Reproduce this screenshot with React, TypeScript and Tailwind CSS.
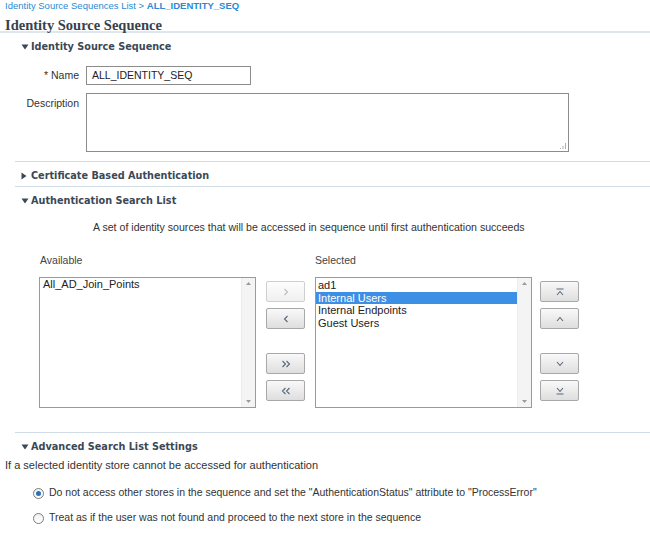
import React from "react";

const sans = "font-['Liberation_Sans',Arial,sans-serif]";

function Tri({ open }: { open: boolean }) {
  return open ? (
    <svg width="8" height="6" viewBox="0 0 8 6" className="shrink-0">
      <path d="M0.5 0.5 H7.5 L4 5.5 Z" fill="#3b4856" />
    </svg>
  ) : (
    <svg width="6" height="8" viewBox="0 0 6 8" className="shrink-0">
      <path d="M0.5 0.5 V7.5 L5.5 4 Z" fill="#3b4856" />
    </svg>
  );
}

function SectionHeader({ open, title, h }: { open: boolean; title: string; h: string }) {
  return (
    <div className={`flex items-center pl-[21px] ${h}`}>
      <span className="flex w-[10px]">
        <Tri open={open} />
      </span>
      <span className="font-['DejaVu_Sans',Verdana,sans-serif] text-[9.7px] font-bold leading-[12px] text-[#3b4856]">
        {title}
      </span>
    </div>
  );
}

function Sep() {
  return <div className="ml-[15px] h-px bg-[#cfdbe5]" />;
}

function ScrollBar() {
  return (
    <div className="flex w-[14px] flex-col items-center justify-between border-l border-[#ececec] bg-[#f4f4f4] py-[4px]">
      <svg width="5" height="3" viewBox="0 0 5 3">
        <path d="M0 3 L2.5 0 L5 3 Z" fill="#9a9a9a" />
      </svg>
      <svg width="5" height="3" viewBox="0 0 5 3">
        <path d="M0 0 L2.5 3 L5 0 Z" fill="#9a9a9a" />
      </svg>
    </div>
  );
}

function Btn({ children, disabled }: { children: React.ReactNode; disabled?: boolean }) {
  return (
    <div
      className={`flex h-[21px] w-[39px] items-center justify-center rounded-[2px] border ${
        disabled
          ? "border-[#cfcfcf] bg-gradient-to-b from-[#fdfdfd] to-[#f0f0f0] text-[#b5bcc4]"
          : "border-[#a8a8a8] bg-gradient-to-b from-[#f9f9f9] to-[#dedede] text-[#56687a]"
      }`}
    >
      {children}
    </div>
  );
}

function Chev({ d }: { d: string }) {
  return (
    <svg width="12" height="10" viewBox="0 0 12 10" fill="none" stroke="currentColor" strokeWidth="1.1">
      <path d={d} />
    </svg>
  );
}

function Radio({ checked }: { checked: boolean }) {
  return (
    <span className="flex h-[11px] w-[11px] items-center justify-center rounded-full border border-[#7c7c7c] bg-gradient-to-b from-[#f2f2f2] to-white">
      {checked && <span className="h-[5px] w-[5px] rounded-full bg-[#2b70b8]" />}
    </span>
  );
}

export default function App() {
  return (
    <div className={`h-[541px] w-[650px] overflow-hidden bg-white text-[#222] ${sans}`}>
      <div className="flex h-[13px] items-center pl-[5px] text-[9.5px] text-[#2a8ad2]">
        Identity Source Sequences List &gt;&nbsp;<span className="font-bold">ALL_IDENTITY_SEQ</span>
      </div>
      <div className="flex h-[20px] items-center border-b-2 border-[#dfe7ee] pl-[5px] pt-[6px] font-['Liberation_Serif','Times_New_Roman',serif] text-[14.5px] font-bold leading-[15px] text-[#37424d]">
        Identity Source Sequence
      </div>

      <div className="h-px" />
      <SectionHeader open title="Identity Source Sequence" h="h-[25px]" />
      <div className="mt-[7px] flex items-center">
        <div className="w-[79px] text-right text-[10.5px] text-[#333]">* Name</div>
        <div className="ml-[7px] flex h-[19px] w-[165px] items-center border border-[#8c8c8c] pl-[5px] text-[10.5px] text-[#222]">
          ALL_IDENTITY_SEQ
        </div>
      </div>
      <div className="mt-[8px] flex items-start">
        <div className="w-[79px] pt-[3px] text-right text-[10.5px] text-[#333]">Description</div>
        <div className="relative ml-[7px] h-[59px] w-[483px] border border-[#8c8c8c]">
          <svg width="6" height="6" viewBox="0 0 6 6" className="absolute bottom-[2px] right-[2px]">
            <path d="M5.5 0 V6 M3 3 V6 M0.5 5 V6" stroke="#b0b0b0" strokeWidth="1" />
          </svg>
        </div>
      </div>
      <div className="h-[9px]" />
      <Sep />
      <SectionHeader open={false} title="Certificate Based Authentication" h="h-[24px] pt-[3px]" />
      <Sep />
      <SectionHeader open title="Authentication Search List" h="h-[25px] pt-[2px]" />

      <div className="mt-[9px] flex h-[14px] items-center pl-[93px] text-[10.6px] text-[#333]">
        A set of identity sources that will be accessed in sequence until first authentication succeeds
      </div>

      <div className="mt-[19px] flex h-[14px] items-center text-[10.5px] text-[#444]">
        <div className="w-[314px] pl-[40px]">Available</div>
        <div className="pl-[1px]">Selected</div>
      </div>

      <div className="mt-[9px] flex pl-[39px]">
        <div className="flex h-[131px] w-[217px] border border-[#9a9a9a]">
          <div className="flex-1 pl-[3px] text-[11px] leading-[13px]">All_AD_Join_Points</div>
          <ScrollBar />
        </div>
        <div className="ml-[10px] flex flex-col pt-[4px]">
          <Btn disabled>
            <Chev d="M4.5 2 L7.5 5 L4.5 8" />
          </Btn>
          <div className="h-[6px]" />
          <Btn>
            <Chev d="M7.5 2 L4.5 5 L7.5 8" />
          </Btn>
          <div className="h-[24px]" />
          <Btn>
            <Chev d="M2.5 2 L5.5 5 L2.5 8 M6.5 2 L9.5 5 L6.5 8" />
          </Btn>
          <div className="h-[6px]" />
          <Btn>
            <Chev d="M5.5 2 L2.5 5 L5.5 8 M9.5 2 L6.5 5 L9.5 8" />
          </Btn>
        </div>
        <div className="ml-[10px] flex h-[131px] w-[217px] border border-[#9a9a9a]">
          <div className="flex-1 pt-[1px] text-[11px] leading-[12.7px]">
            <div className="pl-[2px]">ad1</div>
            <div className="bg-[#3d8fe6] pl-[2px] text-white">Internal Users</div>
            <div className="pl-[2px]">Internal Endpoints</div>
            <div className="pl-[2px]">Guest Users</div>
          </div>
          <ScrollBar />
        </div>
        <div className="ml-[8px] flex flex-col pt-[4px]">
          <Btn>
            <Chev d="M2.5 2 H9.5 M3 8 L6 4.5 L9 8" />
          </Btn>
          <div className="h-[6px]" />
          <Btn>
            <Chev d="M3 7 L6 3.5 L9 7" />
          </Btn>
          <div className="h-[24px]" />
          <Btn>
            <Chev d="M3 3 L6 6.5 L9 3" />
          </Btn>
          <div className="h-[6px]" />
          <Btn>
            <Chev d="M3 2 L6 5.5 L9 2 M2.5 8 H9.5" />
          </Btn>
        </div>
      </div>

      <div className="h-[24px]" />
      <Sep />
      <SectionHeader open title="Advanced Search List Settings" h="h-[25px] pt-[2px]" />
      <div className="flex h-[14px] items-center pl-[5px] text-[11px] text-[#333]">
        If a selected identity store cannot be accessed for authentication
      </div>
      <div className="mt-[14px] flex h-[14px] items-center gap-[5px] pl-[33px] text-[10.5px] text-[#333]">
        <Radio checked />
        <span>
          Do not access other stores in the sequence and set the "AuthenticationStatus" attribute to "ProcessError"
        </span>
      </div>
      <div className="mt-[11px] flex h-[14px] items-center gap-[5px] pl-[33px] text-[10.5px] text-[#333]">
        <Radio checked={false} />
        <span>Treat as if the user was not found and proceed to the next store in the sequence</span>
      </div>
    </div>
  );
}
